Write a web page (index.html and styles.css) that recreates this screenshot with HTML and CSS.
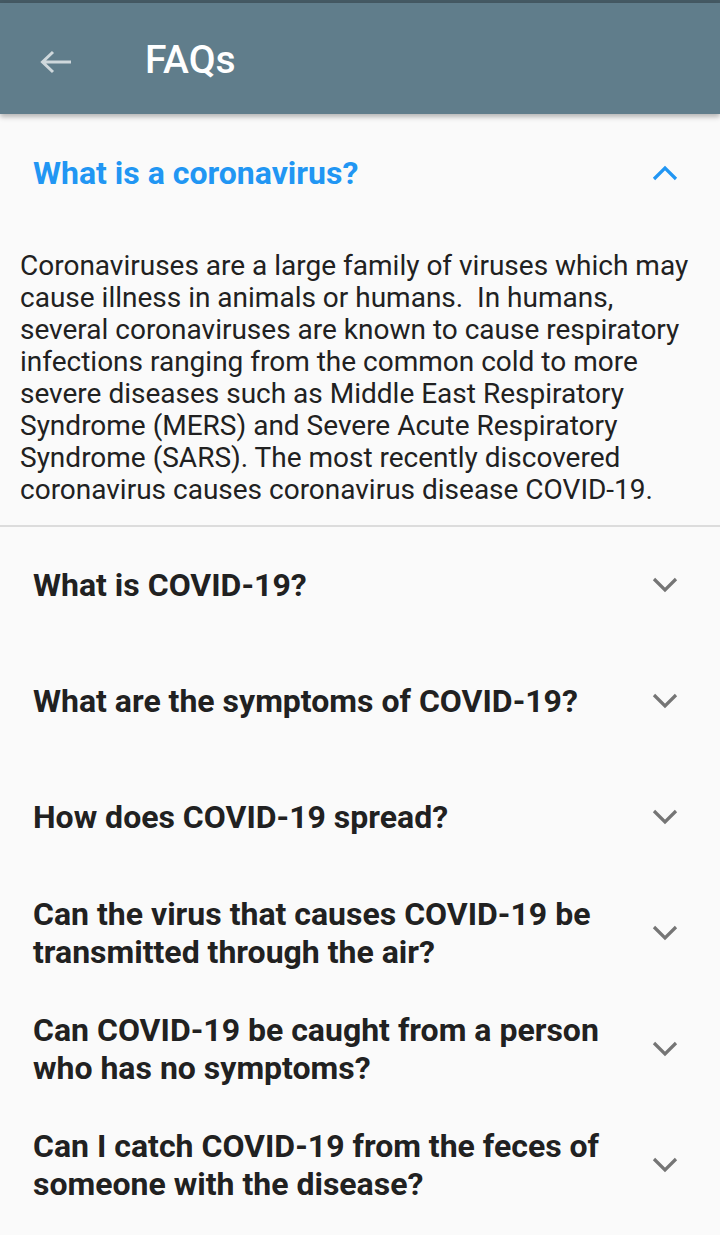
FILE: index.html
```html
<!DOCTYPE html>
<html>
<head>
<meta charset="utf-8">
<link rel="stylesheet" href="styles.css">
</head>
<body>
<div class="status"></div>
<header class="appbar">
  <svg class="back" width="34" height="24" viewBox="0 0 34 24"><path d="M32 12H4M14 2L3.5 12 14 22" fill="none" stroke="#cfd8dc" stroke-width="3"/></svg>
  <h1 class="title">FAQs</h1>
</header>
<main class="list">
  <section class="item open">
    <div class="q">
      <span class="qtext">What is a coronavirus?</span>
      <svg class="chev" width="26" height="16" viewBox="0 0 26 16"><path d="M2 14L13 3l11 11" fill="none" stroke="currentColor" stroke-width="3.2"/></svg>
    </div>
    <p class="answer">Coronaviruses are a large family of viruses which may cause illness in animals or humans.&nbsp; In humans, several coronaviruses are known to cause respiratory infections ranging from the common cold to more severe diseases such as Middle East Respiratory Syndrome (MERS) and Severe Acute Respiratory Syndrome (SARS). The most recently discovered coronavirus causes coronavirus disease COVID-19.</p>
  </section>
  <section class="item">
    <div class="q"><span class="qtext">What is COVID-19?</span><svg class="chev" width="26" height="16" viewBox="0 0 26 16"><path d="M2 2l11 11L24 2" fill="none" stroke="currentColor" stroke-width="3.2"/></svg></div>
  </section>
  <section class="item">
    <div class="q"><span class="qtext">What are the symptoms of COVID-19?</span><svg class="chev" width="26" height="16" viewBox="0 0 26 16"><path d="M2 2l11 11L24 2" fill="none" stroke="currentColor" stroke-width="3.2"/></svg></div>
  </section>
  <section class="item">
    <div class="q"><span class="qtext">How does COVID-19 spread?</span><svg class="chev" width="26" height="16" viewBox="0 0 26 16"><path d="M2 2l11 11L24 2" fill="none" stroke="currentColor" stroke-width="3.2"/></svg></div>
  </section>
  <section class="item">
    <div class="q"><span class="qtext">Can the virus that causes COVID-19 be transmitted through the air?</span><svg class="chev" width="26" height="16" viewBox="0 0 26 16"><path d="M2 2l11 11L24 2" fill="none" stroke="currentColor" stroke-width="3.2"/></svg></div>
  </section>
  <section class="item">
    <div class="q"><span class="qtext">Can COVID-19 be caught from a person who has no symptoms?</span><svg class="chev" width="26" height="16" viewBox="0 0 26 16"><path d="M2 2l11 11L24 2" fill="none" stroke="currentColor" stroke-width="3.2"/></svg></div>
  </section>
  <section class="item">
    <div class="q"><span class="qtext">Can I catch COVID-19 from the feces of someone with the disease?</span><svg class="chev" width="26" height="16" viewBox="0 0 26 16"><path d="M2 2l11 11L24 2" fill="none" stroke="currentColor" stroke-width="3.2"/></svg></div>
  </section>
</main>
</body>
</html>
```
FILE: styles.css
```css
* { box-sizing: border-box; }
html, body {
  margin: 0;
  padding: 0;
  background: #fafafa;
  font-family: Roboto, "Liberation Sans", sans-serif;
  height: 1235px;
  overflow: hidden;
}
.status {
  height: 3px;
  background: #455a64;
}
.appbar {
  height: 111px;
  background: #607d8b;
  display: flex;
  align-items: center;
  padding: 3px 0 0 39px;
  box-shadow: 0 3px 5px rgba(0,0,0,0.28);
  position: relative;
  z-index: 1;
}
.back {
  display: block;
  margin-top: 3px;
}
.title {
  margin: 0 0 0 72px;
  color: #ffffff;
  font-size: 39px;
  font-weight: 500;
  letter-spacing: 0;
}
.list {
  display: flex;
  flex-direction: column;
}
.q {
  height: 116px;
  display: flex;
  align-items: center;
  justify-content: space-between;
  padding: 0 42px 0 33px;
}
.qtext {
  font-size: 32px;
  font-weight: 700;
  line-height: 38px;
  color: #212121;
  max-width: 575px;
}
.chev {
  display: block;
  color: #757575;
  flex: none;
}
.open .q {
  padding-top: 2px;
}
.open .qtext, .open .chev {
  color: #2196f3;
}
.open {
  border-bottom: 2px solid #dcdcdc;
}
.answer {
  margin: 0;
  padding: 20px 20px 19px 20px;
  font-size: 28px;
  line-height: 32px;
  color: #212121;
}
```
